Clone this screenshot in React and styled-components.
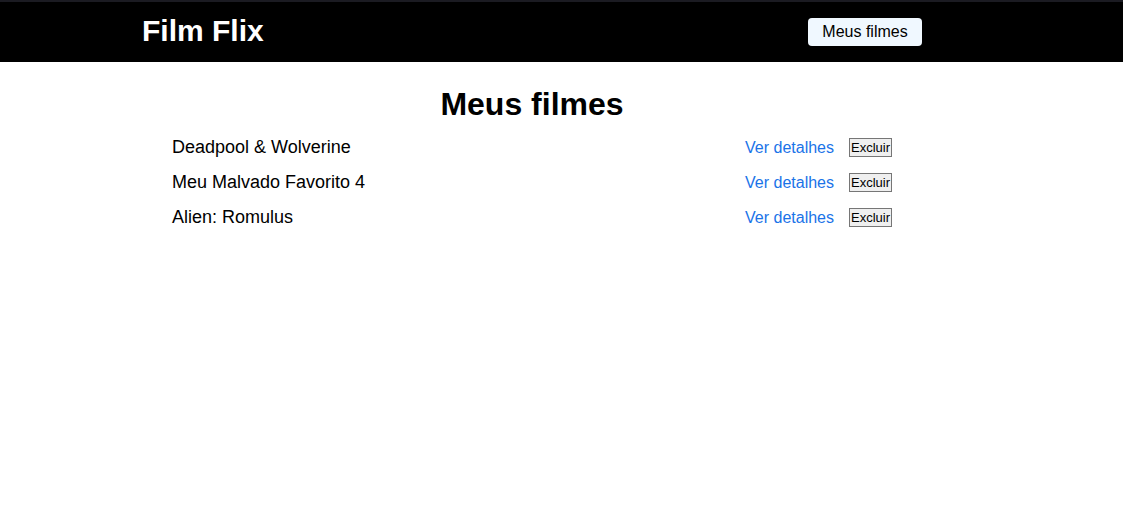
import React from "react";
import styled, { createGlobalStyle } from "styled-components";

const movies = [
  { id: 1, title: "Deadpool & Wolverine" },
  { id: 2, title: "Meu Malvado Favorito 4" },
  { id: 3, title: "Alien: Romulus" },
];

export default function App() {
  return (
    <>
      <GlobalStyle />
      <Header>
        <Brand>Film Flix</Brand>
        <NavButton>Meus filmes</NavButton>
      </Header>
      <Container>
        <Title>Meus filmes</Title>
        <MovieList>
          {movies.map((item) => (
            <MovieItem key={item.id}>
              <MovieName>{item.title}</MovieName>
              <Actions>
                <DetailsLink href="#">Ver detalhes</DetailsLink>
                <DeleteButton>Excluir</DeleteButton>
              </Actions>
            </MovieItem>
          ))}
        </MovieList>
      </Container>
    </>
  );
}

const GlobalStyle = createGlobalStyle`
  * { box-sizing: border-box; }
  body {
    margin: 0;
    background: #fff;
    font-family: "Liberation Sans", Arial, sans-serif;
  }
`;

// barra do topo
const Header = styled.header`
  display: flex;
  align-items: center;
  justify-content: space-between;
  height: 62px;
  padding: 0 201px 0 142px;
  background: #000;
  border-top: 2px solid #1b1b22;
`;

const Brand = styled.span`
  color: #fff;
  font-size: 30px;
  font-weight: bold;
  line-height: 1;
  margin-top: -2px;
`;

const NavButton = styled.button`
  width: 114px;
  height: 28px;
  padding: 0;
  border: none;
  border-radius: 4px;
  background: #f0f8ff;
  color: #000;
  font-family: "Liberation Sans", Arial, sans-serif;
  font-size: 16px;
  cursor: pointer;
`;

const Container = styled.main`
  width: 780px;
  margin-left: 142px;
`;

const Title = styled.h1`
  margin: 22px 0 0;
  text-align: center;
  font-size: 32px;
  line-height: 40px;
`;

const MovieList = styled.ul`
  list-style: none;
  margin: 0;
  padding: 6px 30px 0;
`;

const MovieItem = styled.li`
  display: flex;
  align-items: center;
  justify-content: space-between;
  height: 35px;
`;

const MovieName = styled.span`
  font-size: 18px;
  color: #000;
`;

const Actions = styled.div`
  display: flex;
  align-items: center;
  gap: 15px;
`;

const DetailsLink = styled.a`
  color: #1a73e8;
  font-size: 16px;
  text-decoration: none;
`;

const DeleteButton = styled.button`
  height: 19px;
  padding: 0 1px;
  font-family: "Liberation Sans", Arial, sans-serif;
  font-size: 13px;
  background: #efefef;
  border: 1px solid #767676;
  color: #000;
`;
